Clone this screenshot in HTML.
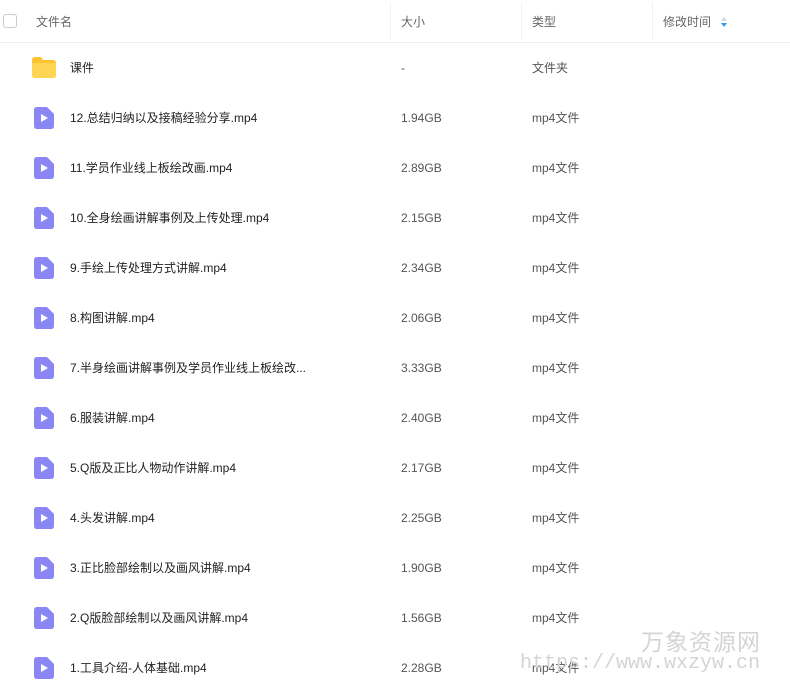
<!DOCTYPE html>
<html><head><meta charset="utf-8"><style>
body{margin:0;width:790px;height:698px;background:#fff;font-family:"Liberation Sans","Noto Sans CJK SC",sans-serif;font-size:12px;color:#424e67;position:relative;overflow:hidden}
.hd{position:absolute;top:0;left:0;width:790px;height:42px;border-bottom:1px solid #f0f0f2;color:#666}
.hd span{position:absolute;top:0;line-height:44px;height:42px}
.dv{position:absolute;top:2px;width:1px;height:38px;background:#f2f2f4}
.cb{position:absolute;left:3px;top:14px;width:12px;height:12px;border:1px solid #ccc;border-radius:3px}
.r{position:absolute;left:0;width:790px;height:50px}
.r span{position:absolute;top:0;height:50px;line-height:50px;white-space:nowrap}
.n{left:70px;color:#222}
.s{left:401px;color:#555}
.t{left:532px;color:#555}
.ic{position:absolute;left:34px;top:14px}
.wm{position:absolute;color:#d4d4d4;white-space:nowrap}
</style></head><body>
<div class="hd"><div class="cb"></div><span style="left:36px">文件名</span><div class="dv" style="left:390px"></div><span style="left:401px">大小</span><div class="dv" style="left:521px"></div><span style="left:532px">类型</span><div class="dv" style="left:652px"></div><span style="left:663px">修改时间</span>
<svg style="position:absolute;left:721px;top:17px" width="6" height="10"><path d="M0 4L3 0L6 4Z" fill="#cfd8e3"/><path d="M0 6L3 10L6 6Z" fill="#2e9bf0"/></svg></div>
<div class="r" style="top:43px"><svg class="ic" style="left:32px;top:14px" width="24" height="21"><path d="M0 3Q0 0 3 0H9L11 3H21Q24 3 24 6V18Q24 21 21 21H3Q0 21 0 18Z" fill="#fbc531"/><path d="M0 6H24V18Q24 21 21 21H3Q0 21 0 18Z" fill="#fdd553"/></svg><span class="n">课件</span><span class="s">-</span><span class="t">文件夹</span></div>
<div class="r" style="top:93px"><svg class="ic" width="20" height="22"><path d="M3 0H13L20 7V19Q20 22 17 22H3Q0 22 0 19V3Q0 0 3 0Z" fill="#8a87f5"/><path d="M7 7L14 11L7 15Z" fill="#fff"/></svg><span class="n">12.总结归纳以及接稿经验分享.mp4</span><span class="s">1.94GB</span><span class="t">mp4文件</span></div>
<div class="r" style="top:143px"><svg class="ic" width="20" height="22"><path d="M3 0H13L20 7V19Q20 22 17 22H3Q0 22 0 19V3Q0 0 3 0Z" fill="#8a87f5"/><path d="M7 7L14 11L7 15Z" fill="#fff"/></svg><span class="n">11.学员作业线上板绘改画.mp4</span><span class="s">2.89GB</span><span class="t">mp4文件</span></div>
<div class="r" style="top:193px"><svg class="ic" width="20" height="22"><path d="M3 0H13L20 7V19Q20 22 17 22H3Q0 22 0 19V3Q0 0 3 0Z" fill="#8a87f5"/><path d="M7 7L14 11L7 15Z" fill="#fff"/></svg><span class="n">10.全身绘画讲解事例及上传处理.mp4</span><span class="s">2.15GB</span><span class="t">mp4文件</span></div>
<div class="r" style="top:243px"><svg class="ic" width="20" height="22"><path d="M3 0H13L20 7V19Q20 22 17 22H3Q0 22 0 19V3Q0 0 3 0Z" fill="#8a87f5"/><path d="M7 7L14 11L7 15Z" fill="#fff"/></svg><span class="n">9.手绘上传处理方式讲解.mp4</span><span class="s">2.34GB</span><span class="t">mp4文件</span></div>
<div class="r" style="top:293px"><svg class="ic" width="20" height="22"><path d="M3 0H13L20 7V19Q20 22 17 22H3Q0 22 0 19V3Q0 0 3 0Z" fill="#8a87f5"/><path d="M7 7L14 11L7 15Z" fill="#fff"/></svg><span class="n">8.构图讲解.mp4</span><span class="s">2.06GB</span><span class="t">mp4文件</span></div>
<div class="r" style="top:343px"><svg class="ic" width="20" height="22"><path d="M3 0H13L20 7V19Q20 22 17 22H3Q0 22 0 19V3Q0 0 3 0Z" fill="#8a87f5"/><path d="M7 7L14 11L7 15Z" fill="#fff"/></svg><span class="n">7.半身绘画讲解事例及学员作业线上板绘改...</span><span class="s">3.33GB</span><span class="t">mp4文件</span></div>
<div class="r" style="top:393px"><svg class="ic" width="20" height="22"><path d="M3 0H13L20 7V19Q20 22 17 22H3Q0 22 0 19V3Q0 0 3 0Z" fill="#8a87f5"/><path d="M7 7L14 11L7 15Z" fill="#fff"/></svg><span class="n">6.服装讲解.mp4</span><span class="s">2.40GB</span><span class="t">mp4文件</span></div>
<div class="r" style="top:443px"><svg class="ic" width="20" height="22"><path d="M3 0H13L20 7V19Q20 22 17 22H3Q0 22 0 19V3Q0 0 3 0Z" fill="#8a87f5"/><path d="M7 7L14 11L7 15Z" fill="#fff"/></svg><span class="n">5.Q版及正比人物动作讲解.mp4</span><span class="s">2.17GB</span><span class="t">mp4文件</span></div>
<div class="r" style="top:493px"><svg class="ic" width="20" height="22"><path d="M3 0H13L20 7V19Q20 22 17 22H3Q0 22 0 19V3Q0 0 3 0Z" fill="#8a87f5"/><path d="M7 7L14 11L7 15Z" fill="#fff"/></svg><span class="n">4.头发讲解.mp4</span><span class="s">2.25GB</span><span class="t">mp4文件</span></div>
<div class="r" style="top:543px"><svg class="ic" width="20" height="22"><path d="M3 0H13L20 7V19Q20 22 17 22H3Q0 22 0 19V3Q0 0 3 0Z" fill="#8a87f5"/><path d="M7 7L14 11L7 15Z" fill="#fff"/></svg><span class="n">3.正比脸部绘制以及画风讲解.mp4</span><span class="s">1.90GB</span><span class="t">mp4文件</span></div>
<div class="r" style="top:593px"><svg class="ic" width="20" height="22"><path d="M3 0H13L20 7V19Q20 22 17 22H3Q0 22 0 19V3Q0 0 3 0Z" fill="#8a87f5"/><path d="M7 7L14 11L7 15Z" fill="#fff"/></svg><span class="n">2.Q版脸部绘制以及画风讲解.mp4</span><span class="s">1.56GB</span><span class="t">mp4文件</span></div>
<div class="r" style="top:643px"><svg class="ic" width="20" height="22"><path d="M3 0H13L20 7V19Q20 22 17 22H3Q0 22 0 19V3Q0 0 3 0Z" fill="#8a87f5"/><path d="M7 7L14 11L7 15Z" fill="#fff"/></svg><span class="n">1.工具介绍-人体基础.mp4</span><span class="s">2.28GB</span><span class="t">mp4文件</span></div>
<div class="wm" style="left:641px;top:623px;font-size:23px;letter-spacing:1px">万象资源网</div>
<div class="wm" style="left:520px;top:652px;font-family:'Liberation Mono',monospace;font-size:20px">https://www.wxzyw.cn</div>
</body></html>
